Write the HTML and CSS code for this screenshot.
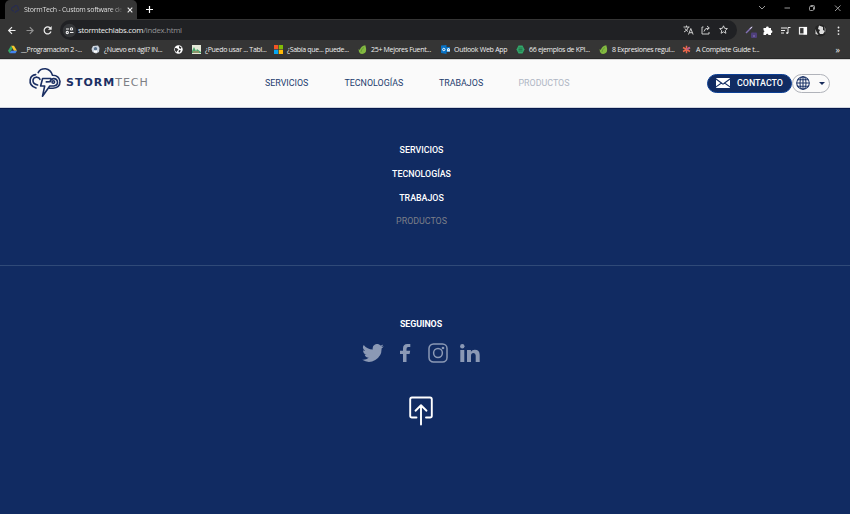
FILE: index.html
```html
<!DOCTYPE html>
<html lang="es">
<head>
<meta charset="utf-8">
<title>StormTech - Custom software development</title>
<link rel="stylesheet" href="styles.css">
</head>
<body>
<div class="tabs">
  <div class="tab">
    <svg class="favicon" width="9" height="9" viewBox="0 0 9 9" fill="none" stroke="#252b58"><path d="M3 6H2a2 2 0 0 1 1-4 2 2 0 0 1 4 1 2 2 0 0 1 0 3H5L4 8"/></svg>
    <span class="tab-title">StormTech - Custom software de</span>
    <svg width="6" height="6" viewBox="0 0 6 6" stroke="#eee" stroke-width="1.1"><path d="M.7.7l4.6 4.6M5.3.7L.7 5.3"/></svg>
  </div>
  <svg class="newtab" width="7" height="7" viewBox="0 0 7 7" stroke="#fff" stroke-width="1.2"><path d="M3.5 0v7M0 3.5h7"/></svg>
  <svg class="winctl" width="86" height="12" viewBox="0 0 86 12" fill="none" stroke="#aaa" stroke-width=".9"><path d="M2 4l3 3 3-3M27.500 6h5.500M78 3.500l5.500 5.500M83.500 3.500L78 9"/><rect x="52.500" y="4.500" width="4" height="4" rx=".8"/><path d="M53.500 3.500h3q1 0 1 1v3"/></svg>
</div>
<div class="toolbar">
  <svg class="navctl" width="60" height="20" viewBox="0 0 60 20" fill="none" stroke="#eee" stroke-width="1.2"><path d="M15.500 10.500H9M12 7.200l-3.300 3.300 3.300 3.300"/><path stroke="#929292" d="M26.500 10.500H33M29.800 7.200l3.300 3.300-3.300 3.300"/><path d="M50.600 8.500a3.500 3.500 0 1 0 .4 3"/><path fill="#eee" stroke="none" d="M51.700 6v3.700H48z"/></svg>
  <div class="omnibox">
    <svg width="15" height="15" viewBox="0 0 15 15" fill="none" stroke="#eee" stroke-width="1.1"><circle cx="7.500" cy="7.500" r="6.800" fill="#343639" stroke="none"/><path d="M4 6h3M8 9.500h3.500"/><circle cx="9.500" cy="5.900" r="1.100"/><circle cx="5.300" cy="9.500" r="1.100"/></svg>
    <span class="url">stormtechlabs.com<span class="path">/index.html</span></span>
    <svg class="urlicons" width="48" height="14" viewBox="0 0 48 14" fill="none" stroke="#ddd" stroke-width=".9"><path d="M.5 4h6M3.500 2.500V4M5.500 4Q4.500 7.500 1 9M2 5.500Q3 7.500 5 8.500M5.500 11.500l2.300-6 2.300 6M6.300 9.700h3"/><path d="M20.500 4H19v7h7V9M21 8.500q.5-3.500 5-3.500M24 3l2.300 2L24 7"/><path d="M40.500 2.800l1.100 2.500 2.800.3-2.100 1.900.6 2.800-2.400-1.500-2.400 1.500.6-2.800-2.100-1.900 2.800-.3z"/></svg>
  </div>
  <svg class="extensions" width="113" height="20" viewBox="0 0 113 20" fill="none"><path d="M9 13l6-6" stroke="#8270b4" stroke-width="1.500"/><path d="M13 8.800l2-2" stroke="#eee"/><rect x="14" y="12.500" width="6" height="5.500" rx="1" fill="#4e3f7b"/><path d="M16.500 15.500h1v1h-1z" fill="#c5b6ef"/><path fill="#fff" d="M26.500 8H29a1.400 1.400 0 0 1 2.800 0H34v2.300a1.400 1.400 0 0 1 0 2.800V15h-2.600a1.200 1.200 0 0 0-2.400 0h-2.500v-2.500a1.200 1.200 0 0 0 0-2.300z"/><path stroke="#eee" d="M44 8h6M44 10.500h4M44 13h3M51 13V7.500h2.500"/><circle cx="50.200" cy="13" r="1.100" fill="#eee"/><rect x="62.500" y="7.500" width="7" height="6.500" stroke="#eee" stroke-width="1.200"/><path fill="#fff" d="M66.500 7H70v7.500h-3.500z"/><circle cx="83.500" cy="10.500" r="6" fill="#242424"/><path fill="#ddd" d="M82 5.500l4 1.500v3l2 1-2 3h-3l-1-2 1-2-2-1zM78.500 9l1 3 2 3-3-1z"/><path fill="#777" d="M87 6l2 3-1 5z"/><g fill="#eee"><circle cx="101.500" cy="7.500" r=".9"/><circle cx="101.500" cy="10.800" r=".9"/><circle cx="101.500" cy="14.100" r=".9"/></g></svg>
</div>
<div class="bookmarks">
  <span class="bm b1"><svg viewBox="0 0 9 9"><path fill="#f8c82b" d="M3 .7h3l3 5H6z"/><path fill="#36a866" d="M3 .7l1.500 2.600L1.600 8.300 0 5.700z"/><path fill="#4385ef" d="M3.100 5.700H9L7.500 8.300H1.600z"/></svg><span>__Programacion 2 -...</span></span>
  <span class="bm b2"><svg viewBox="0 0 9 9"><path fill="#cbd4df" d="M2 1l5-.5L8.500 3 8 7 5 8.500 1.500 7 .5 4z"/><circle cx="4.500" cy="3.800" r="1.700" fill="#59718b"/><path fill="#fff" d="M3 5.500h3v2H3z"/></svg><span>¿Nuevo en ágil? IN...</span></span>
  <span class="bm b3"><svg viewBox="0 0 9 9"><circle cx="4.500" cy="4.500" r="4.200" fill="#fff"/><path fill="#333" d="M1 3l2 .2 1.500 1.500L3 6 2.500 7.500 1 5.500zM5 1l2.500 1.500-1 1.500L5 3zM5 5l2 .5-1.500 2L4.500 7z"/></svg></span>
  <span class="bm b4"><svg viewBox="0 0 9 9"><path fill="#e5e9d7" d="M0 0h9v9H0z"/><path fill="#4ba66c" d="M0 6l2-4 2 4 1-2 4 3v1H0z"/><path stroke="#cf8067" d="M1 7h6"/></svg><span>¿Puedo usar ... Tabl...</span></span>
  <span class="bm b5"><svg viewBox="0 0 9 9"><path fill="#f35325" d="M0 0h4.200v4.200H0z"/><path fill="#81bc06" d="M4.800 0H9v4.200H4.800z"/><path fill="#05a6f0" d="M0 4.800h4.200V9H0z"/><path fill="#ffba08" d="M4.800 4.800H9V9H4.800z"/></svg><span>¿Sabía que... puede...</span></span>
  <span class="bm b6"><svg viewBox="0 0 9 9"><path fill="#83b941" d="M7.300.2Q10 8.800 4.200 9 .4 8.500.7 4l1 1Q3 1 7.300.2z"/><path stroke="#568e2f" stroke-width=".7" fill="none" d="M3 7Q3 4 6 2.500"/></svg><span>25+ Mejores Fuent...</span></span>
  <span class="bm b7"><svg viewBox="0 0 9 9"><path fill="#0872c4" d="M0 .5l5.500-.5v9L0 8zM5 2h4v5H5z"/><circle cx="2.800" cy="4.500" r="1.200" fill="none" stroke="#fff" stroke-width=".9"/><path fill="#e0effa" d="M6 3h3v3.500H6z"/><path stroke="#0872c4" stroke-width=".6" fill="none" d="M6 3l1.500 1.500L9 3"/></svg><span>Outlook Web App</span></span>
  <span class="bm b8"><svg viewBox="0 0 9 9"><path fill="#32a76b" d="M2.500.5h4l2 4-2 4h-4l-2-4z"/><path stroke="#1c653f" stroke-width=".7" d="M2.500 3h4M2.500 4.500h4M2.500 6h4"/></svg><span>66 ejemplos de KPI...</span></span>
  <span class="bm b9"><svg viewBox="0 0 9 9"><path fill="#83b941" d="M7.300.2Q10 8.800 4.200 9 .4 8.500.7 4l1 1Q3 1 7.300.2z"/><path stroke="#568e2f" stroke-width=".7" fill="none" d="M3 7Q3 4 6 2.500"/></svg><span>8 Expresiones regul...</span></span>
  <span class="bm b10"><svg viewBox="0 0 9 9" stroke="#ec674a" stroke-width="1.500"><path d="M4.500.7v7.600M1 2.500l7 4M8 2.500l-7 4"/><path stroke="#b05b94" d="M4.500 4.500L8 2.500"/></svg><span>A Complete Guide t...</span></span>
  <span class="more">»</span>
</div>
<header class="site">
  <svg class="mark" width="34" height="32" viewBox="0 0 34 32" fill="none" stroke="#1b2f63" stroke-width="1.600" stroke-linecap="round" stroke-linejoin="round"><path d="M8 21Q1.200 19 2.200 12.600 3 8 7.700 7.600"/><path d="M9.600 18Q4.600 17 5 13.200 5.300 10.300 8.500 10.200"/><path d="M10.200 5.600Q12 1.500 17.500 1.700 23 2.600 24.500 8.300 31 8.200 32 14.500 32 20.800 25 21.200h-3.500"/><path d="M8.500 10.200q3 .1 3.400 2.200"/><path d="M22.800 11.500H14.600l-2 7.500h4.100l-2.200 10.200 7.300-10.200h4q4-.8 3.700-4-.5-3.500-4-3.400-3 .3-3.400 3.200l-3.800.1"/><circle cx="25.300" cy="15" r="1.300"/></svg>
  <div class="brand"><b>STORM</b><span>TECH</span></div>
  <nav><a class="n1">SERVICIOS</a><a class="n2">TECNOLOGÍAS</a><a class="n3">TRABAJOS</a><a class="n4 muted">PRODUCTOS</a></nav>
  <a class="contact"><svg width="14" height="10" viewBox="0 0 14 10"><rect width="14" height="10" rx=".8" fill="#fff"/><path d="M0 1l5.500 4L0 8.800M14 1L8.500 5 14 8.800M5.200 5L7 6.200 8.800 5" fill="none" stroke="#112b62" stroke-width="1.100"/></svg><span>CONTACTO</span></a>
  <div class="language"><svg width="14" height="14" viewBox="0 0 14 14" fill="none" stroke="#1a3267" stroke-width="1.050"><circle cx="7" cy="7" r="6.300"/><ellipse cx="7" cy="7" rx="3" ry="6.300"/><path d="M7 .7v12.600M.7 7h12.600M1.700 3.800h10.600M1.700 10.200h10.600"/></svg><i></i></div>
</header>
<main>
  <section class="links"><a>SERVICIOS</a><a>TECNOLOGÍAS</a><a>TRABAJOS</a><a class="dim">PRODUCTOS</a></section>
  <section class="follow">
    <h2>SEGUINOS</h2>
    <div class="social">
      <svg width="22" height="18" viewBox="0 0 24 20" fill="#8b99b5"><path d="M24 2.400a10 10 0 0 1-2.800.8A5 5 0 0 0 23.300.5a10 10 0 0 1-3.100 1.200 4.900 4.900 0 0 0-8.400 4.500A14 14 0 0 1 1.700 1a4.900 4.900 0 0 0 1.500 6.600A5 5 0 0 1 1 7a4.900 4.900 0 0 0 3.900 4.900 5 5 0 0 1-2.200.1 4.900 4.900 0 0 0 4.600 3.400A9.900 9.900 0 0 1 0 17.500 14 14 0 0 0 21.500 5 10 10 0 0 0 24 2.400z"/></svg>
      <svg class="fb" width="11" height="18" viewBox="0 0 11 18" fill="#8b99b5"><path d="M3 18V10H0V6.700h3V4.500Q3 0 7.300 0H10.300v3.100H8.200Q6.500 3.100 6.500 5v1.700h3.700L9.600 10H6.500v8z"/></svg>
      <svg class="ig" width="20" height="20" viewBox="0 0 20 20" fill="none" stroke="#8b99b5" stroke-width="1.500"><rect x="1" y="1" width="18" height="18" rx="4.500"/><circle cx="10" cy="10" r="4.400"/><circle cx="15" cy="5" r=".6" fill="#8b99b5"/></svg>
      <svg class="li" width="20" height="18" viewBox="0 0 20 18" fill="#8b99b5"><circle cx="2.300" cy="2.200" r="2.200"/><path d="M.3 6h4v12h-4zM7 6h3.900v1.700Q12 5.700 14.800 5.700 19.700 5.700 19.700 11v7h-4v-6.500q0-2.600-2.200-2.600Q11 8.900 11 11.700V18H7z"/></svg>
    </div>
    <svg class="top" width="24" height="30" viewBox="0 0 24 30" fill="none" stroke="#fff" stroke-width="1.900" stroke-linecap="round" stroke-linejoin="round"><path d="M7.500 21.500H3Q1.200 21.500 1.200 19.700V3.500Q1.200 1.500 3 1.500H21Q22.800 1.500 22.800 3.500V19.700Q22.800 21.500 21 21.500H17M12 28.500V9.500M6.500 14.700L12 9.300l5.500 5.400"/></svg>
  </section>
</main>
</body>
</html>
```
FILE: styles.css
```css
* { box-sizing: border-box; }
body { margin: 0; width: 850px; height: 514px; overflow: hidden; background: #112b62; font-family: "Open Sans", sans-serif; }
svg { display: block; flex: none; }
.tabs { height: 19px; background: #000; display: flex; align-items: flex-start; padding-left: 5px; }
.tab { width: 132px; height: 19px; border-radius: 5px 5px 0 0; background: #353535; display: flex; align-items: center; padding-left: 6px; }
.tab-title { width: 98px; margin: 0 5px 0 4px; font-size: 7px; letter-spacing: -.27px; white-space: nowrap; color: transparent; background: linear-gradient(90deg, #eee 88%, #454545); background-clip: text; }
.newtab { margin: 6px 0 0 9px; }
.winctl { margin: 2px 7px 0 auto; }
.toolbar { height: 22px; background: #353535; display: flex; align-items: center; }
.omnibox { width: 677px; height: 20px; border-radius: 10px; background: #202124; display: flex; align-items: center; padding: 0 6px 0 2px; }
.url { margin-left: 1px; font-size: 7.8px; letter-spacing: -.27px; color: #eee; white-space: nowrap; }
.path { color: #929395; }
.urlicons { margin-left: auto; }
.bookmarks { height: 18px; background: #353535; border-bottom: 1px solid #292929; display: flex; align-items: center; padding-left: 8px; }
.bm { width: 83px; display: flex; align-items: center; gap: 4px; color: #eee; font-size: 7px; letter-spacing: -.31px; white-space: nowrap; flex: none; }
.bm svg { width: 9px; height: 9px; }
.b3 { width: 18px; }
.b4 { width: 82px; }
.b5 { width: 84px; }
.b7 { width: 75px; letter-spacing: -.27px; }
.b10 { width: 84px; gap: 5px; letter-spacing: -.26px; }
.more { margin-left: auto; padding-right: 10px; color: #eee; font-size: 9px; line-height: 9px; }
.site { height: 50px; background: #fafafa; border-top: 1px solid #d6d6d6; border-bottom: 1px solid #06184b; box-shadow: inset 0 -1px #cfd4df; display: flex; align-items: center; padding-bottom: 2px; font-family: Roboto, sans-serif; }
.mark { margin: 0 4px 0 28px; }
.brand { width: 82px; font: 11px/14px "DejaVu Sans", sans-serif; letter-spacing: 1px; color: #7d7f84; white-space: nowrap; }
.brand b { color: #1b2f63; }
nav { display: flex; width: 442px; margin-left: 117px; font-size: 8.9px; color: #233c6e; }
.n1 { width: 79.5px; }
.n2 { width: 94.5px; }
.n3 { width: 79.5px; }
.muted { color: #afb6c4; }
.contact { width: 85px; height: 19px; border: 1px solid #0c3f94; border-radius: 10px; background: #112b62; display: flex; align-items: center; gap: 7px; padding-left: 8px; color: #fff; font-size: 8.9px; font-weight: 500; }
.language { width: 38px; height: 19px; border: 1px solid #b0b3ba; border-radius: 10px; display: flex; align-items: center; gap: 9px; padding-left: 3px; }
.language i { border: 3px solid transparent; border-top-color: #172b5b; border-bottom: 0; }
main { height: 405px; font-family: Roboto, sans-serif; color: #fff; }
.links { height: 157px; border-bottom: 1px solid #304a78; padding-top: 30px; display: flex; flex-direction: column; align-items: center; font-size: 8.85px; font-weight: 500; line-height: 23.8px; padding-right: 7px; }
.dim { color: #7c7f89; font-weight: 400; }
.follow { display: flex; flex-direction: column; align-items: center; padding-right: 8px; }
h2 { margin: 52px 0 0; font-size: 8.85px; font-weight: 700; letter-spacing: -.08px; line-height: 12px; }
.social { display: flex; align-items: center; height: 20px; margin-top: 13px; }
.fb { margin-left: 16px; }
.ig { margin-left: 17px; }
.li { margin-left: 12px; }
.top { margin-top: 33px; }
```
